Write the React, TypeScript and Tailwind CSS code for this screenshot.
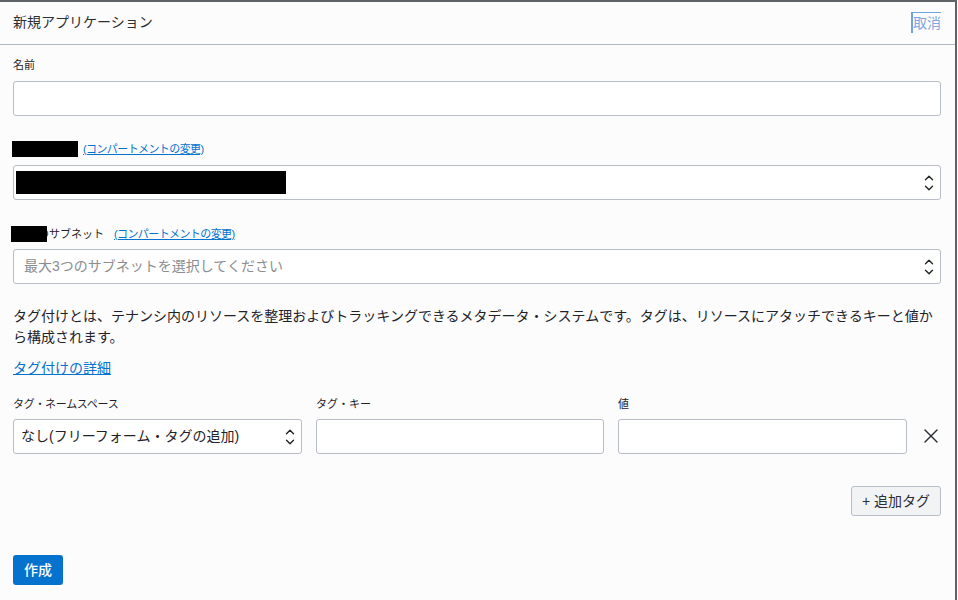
import { ChevronDown, ChevronUp, X } from 'lucide-react';
import type { ReactNode } from 'react';

const font = 'font-["Liberation_Sans","Noto_Sans_CJK_JP",sans-serif]';
const fieldBox = 'rounded-[3px] border border-[#b8bdc7] bg-white';

function Redacted({ className }: { className: string }) {
  return <div className={`bg-black ${className}`} />;
}

function ChangeLink() {
  return (
    <a href="#" className="text-[11px] leading-4 tracking-[-0.6px] text-[#0572ce] underline">
      (コンパートメントの変更)
    </a>
  );
}

function UpDown() {
  return (
    <span className="flex w-[14px] shrink-0 flex-col items-center text-[#1f2329]">
      <ChevronUp size={14} strokeWidth={2.4} className="-mb-[2px]" />
      <ChevronDown size={14} strokeWidth={2.4} className="-mt-[2px]" />
    </span>
  );
}

function SelectBox({ children, className = '' }: { children: ReactNode; className?: string }) {
  return (
    <div className={`flex h-[35px] items-center justify-between pr-[4px] ${fieldBox} ${className}`}>
      {children}
      <UpDown />
    </div>
  );
}

export default function App() {
  return (
    <div className={`h-[600px] w-[958px] overflow-hidden bg-[#fcfcfd] ${font}`}>
      <div className="h-[600px] w-[957px] border-t-2 border-r-2 border-[#5f6368]">
        <header className="flex h-[43px] items-center justify-between border-b border-[#b4b9c6] pr-[14px] pb-[2px] pl-[13px]">
          <h1 className="text-[14px] font-normal text-[#2c2f33]">新規アプリケーション</h1>
          <a href="#" className="mt-[1px] flex h-[21px] items-center border-t border-l-2 border-[#6ea4e4] text-[14px] text-[#7fa8dc]">
            取消
          </a>
        </header>

        <main className="px-[13px]">
          <label className="mt-[12px] block text-[11px] leading-4 text-[#1f2329]">名前</label>
          <div className={`mt-[8px] h-[35px] w-[928px] ${fieldBox}`} />

          <div className="mt-[24px] flex h-[16px] items-center gap-[5px] pt-[1px]">
            <Redacted className="-ml-[1px] h-[16px] w-[66px]" />
            <ChangeLink />
          </div>
          <SelectBox className="mt-[9px] w-[928px]">
            <Redacted className="ml-[2px] h-[23px] w-[270px]" />
          </SelectBox>

          <div className="relative mt-[26px] flex h-[16px] items-center gap-[10px] pl-[25px]">
            <span className="text-[11px] leading-4 text-[#1f2329]">のサブネット</span>
            <ChangeLink />
            <Redacted className="absolute top-0 -left-[2px] h-[16px] w-[36px]" />
          </div>
          <SelectBox className="mt-[7px] w-[928px]">
            <span className="pl-[10px] text-[14px] text-[#8a8d91]">最大3つのサブネットを選択してください</span>
          </SelectBox>

          <p className="mt-[22px] w-[928px] text-[14px] leading-[21px] text-[#1f2329]">
            タグ付けとは、テナンシ内のリソースを整理およびトラッキングできるメタデータ・システムです。タグは、リソースにアタッチできるキーと値から構成されます。
          </p>
          <a href="#" className="mt-[10px] block w-fit text-[14px] leading-[20px] text-[#0572ce] underline">
            タグ付けの詳細
          </a>

          <div className="mt-[18px] flex gap-[14px]">
            <div className="w-[289px] shrink-0">
              <label className="block text-[11px] leading-4 tracking-[-0.3px] text-[#1f2329]">タグ・ネームスペース</label>
              <SelectBox className="mt-[7px]">
                <span className="pl-[7px] text-[14px] text-[#1f2329]">なし(フリーフォーム・タグの追加)</span>
              </SelectBox>
            </div>
            <div className="w-[288px] shrink-0">
              <label className="block text-[11px] leading-4 text-[#1f2329]">タグ・キー</label>
              <div className={`mt-[7px] h-[35px] ${fieldBox}`} />
            </div>
            <div className="w-[289px] shrink-0">
              <label className="block text-[11px] leading-4 text-[#1f2329]">値</label>
              <div className={`mt-[7px] h-[35px] ${fieldBox}`} />
            </div>
            <div className="mt-[22px] -ml-[2px] flex h-[35px] w-[24px] shrink-0 items-center">
              <X size={24} strokeWidth={1.4} className="text-[#2c2f33]" />
            </div>
          </div>

          <div className="mt-[32px] flex w-[928px] justify-end">
            <button className="h-[30px] w-[90px] rounded-[3px] border border-[#b8bdc7] bg-[#f1f3f5] text-[14px] text-[#2c2f33]">
              + 追加タグ
            </button>
          </div>

          <button className="mt-[39px] h-[30px] w-[50px] rounded-[3px] bg-[#0572ce] text-[14px] font-medium text-white">
            作成
          </button>
        </main>
      </div>
    </div>
  );
}
